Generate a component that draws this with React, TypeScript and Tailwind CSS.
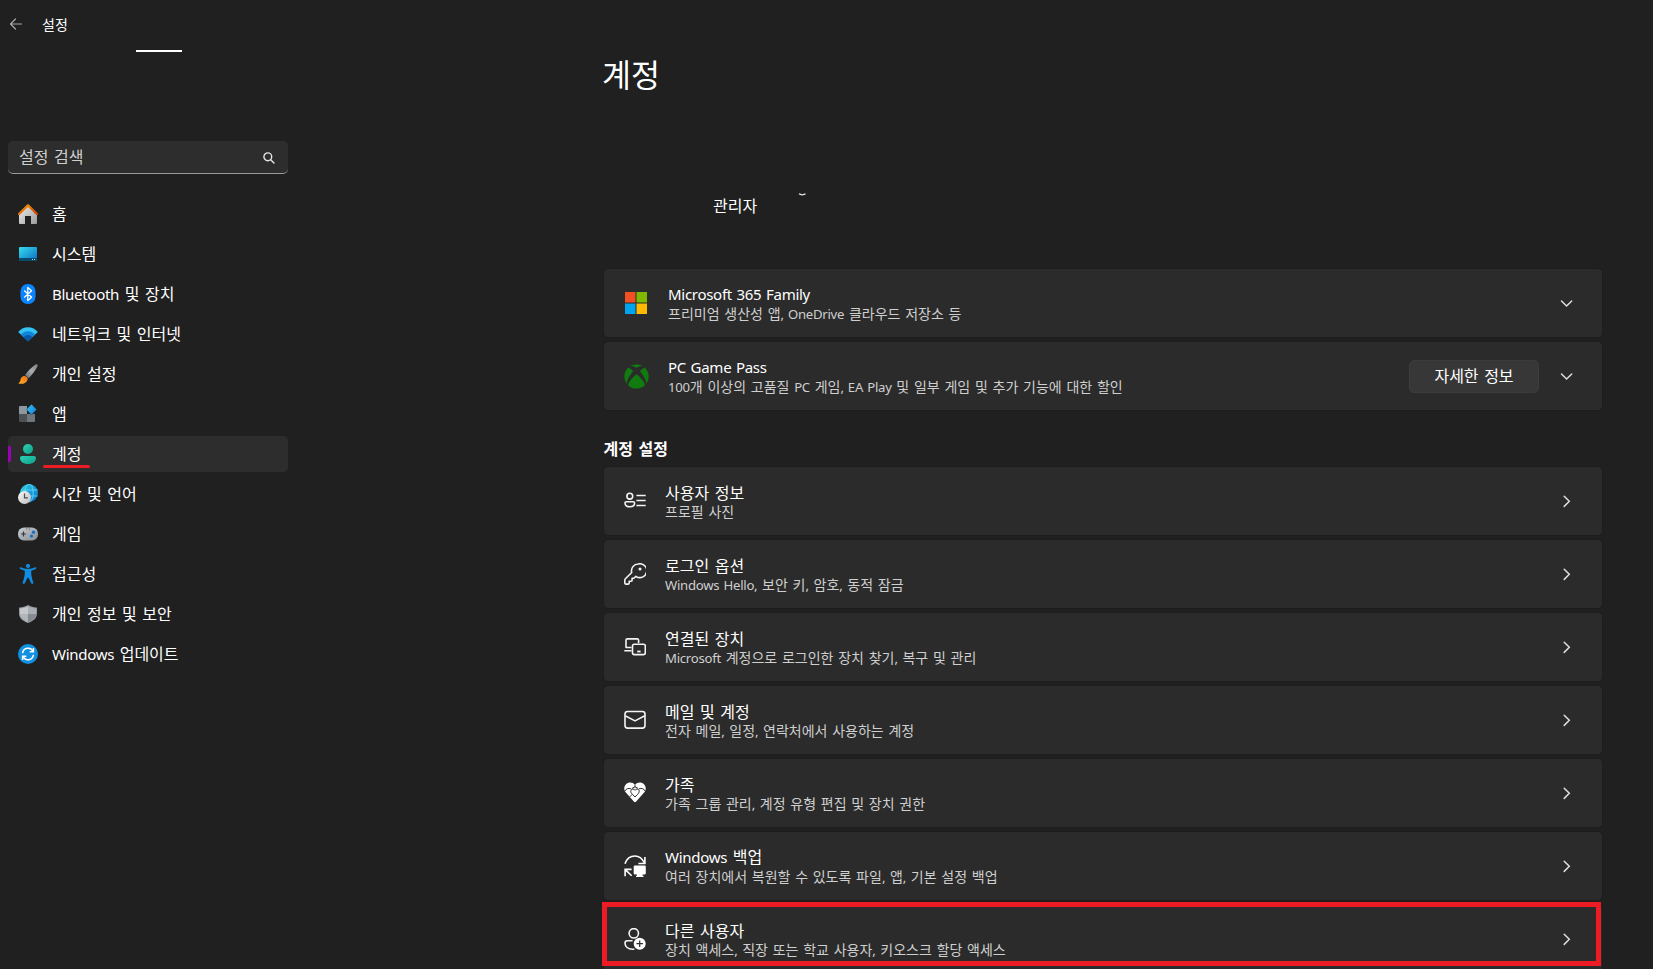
import type { ReactNode } from "react";
import { FaXbox } from "react-icons/fa";

interface NavItem {
  readonly id: string;
  readonly label: string;
  readonly icon: ReactNode;
}

interface SettingItem {
  readonly id: string;
  readonly title: string;
  readonly description: string;
  readonly icon: ReactNode;
}

const LATIN_RUN = /([A-Za-z0-9,]+(?: [A-Za-z0-9,]+)*)/;

// Latin runs are set slightly smaller than Hangul so both scripts look even
function Label({ text }: { readonly text: string }) {
  return (
    <>
      {text.split(LATIN_RUN).map((part, i) =>
        i % 2 === 1 ? (
          <span key={i} className="font-['Noto_Sans',sans-serif] text-[0.94em] tracking-[-0.02em] [word-spacing:1px]">
            {part}
          </span>
        ) : (
          part
        ),
      )}
    </>
  );
}

function HomeIcon() {
  return (
    <svg className="w-5 h-5" viewBox="0 0 20 20" fill="none">
      <defs>
        <linearGradient id="home-wall" x1="0" y1="0" x2="1" y2="1">
          <stop offset="0" stopColor="#f0f0f0" />
          <stop offset="1" stopColor="#9a9a9a" />
        </linearGradient>
        <linearGradient id="home-roof" x1="0" y1="0" x2="1" y2="1">
          <stop offset="0" stopColor="#f7a30c" />
          <stop offset="1" stopColor="#c93f08" />
        </linearGradient>
      </defs>
      <path d="M1 9.5L10 1.5l9 8V19a1 1 0 0 1-1 1h-5v-8H7v8H2a1 1 0 0 1-1-1z" fill="url(#home-wall)" />
      <path d="M1 10l9-8.6L19 10" stroke="url(#home-roof)" strokeWidth="2.4" strokeLinecap="round" strokeLinejoin="round" />
    </svg>
  );
}

function SystemIcon() {
  return (
    <svg className="w-5 h-5" viewBox="0 0 20 20" fill="none">
      <defs>
        <linearGradient id="system-screen" x1="0" y1="0" x2="1" y2="1">
          <stop offset="0" stopColor="#36dcec" />
          <stop offset="1" stopColor="#0a6cc4" />
        </linearGradient>
      </defs>
      <rect x="1" y="3" width="18" height="14" rx="1" fill="url(#system-screen)" />
      <path d="M1 14h18v2a1 1 0 0 1-1 1H2a1 1 0 0 1-1-1z" fill="#0b4a6b" />
      <path d="M14 15.5h1M16 15.5h1" stroke="#9fd8ee" />
    </svg>
  );
}

function BluetoothIcon() {
  return (
    <svg className="w-5 h-5" viewBox="0 0 20 20" fill="none">
      <rect x="2.5" y="0" width="15" height="20" rx="7.2" fill="#0a84ff" />
      <path d="M6.2 6.6l7.4 6.6-3.8 3.3v-13l3.8 3.3-7.4 6.6" stroke="#fff" strokeWidth="1.3" strokeLinejoin="round" />
    </svg>
  );
}

function NetworkIcon() {
  return (
    <svg className="w-5 h-5" viewBox="0 0 20 20" fill="none">
      <path d="M.2 8.1C2.6 5 6 3.2 10 3.2S17.4 5 19.8 8.1L10 17.3z" fill="#35c3f3" />
      <path d="M3 10.7C4.7 8.5 7 7.2 10 7.2s5.3 1.300 7 3.500l-7 6.600z" fill="#0f86dc" />
      <path d="M5.800 13.300c1-1.500 2.400-2.300 4.200-2.300s3.200.8 4.200 2.300L10 17.400z" fill="#0b57a8" />
    </svg>
  );
}

function BrushIcon() {
  return (
    <svg className="w-5 h-5" viewBox="0 0 20 20" fill="none">
      <defs>
        <linearGradient id="brush-handle" x1="1" y1="0" x2="0" y2="1">
          <stop offset="0" stopColor="#7d8286" />
          <stop offset="0.5" stopColor="#a9adb0" />
          <stop offset="1" stopColor="#606468" />
        </linearGradient>
        <linearGradient id="brush-tip" x1="0" y1="1" x2="1" y2="0">
          <stop offset="0" stopColor="#fbb42a" />
          <stop offset="1" stopColor="#ee6a12" />
        </linearGradient>
      </defs>
      <path d="M17.600.6c1.100-.8 2.500.3 1.900 1.600-2.200 4.400-5.300 8.600-8.900 12L7 11C10 7 13.500 3.300 17.600.6z" fill="url(#brush-handle)" />
      <path d="M5.600 12c2.300-.5 4.600 1.400 4 3.700C8.800 19.200 4 20.800.2 19.300c2-.8 2-2.400 2.500-4.200.3-1.500 1.400-2.700 2.900-3.100z" fill="url(#brush-tip)" />
    </svg>
  );
}

function AppsIcon() {
  return (
    <svg className="w-5 h-5" viewBox="0 0 20 20" fill="none">
      <defs>
        <linearGradient id="apps-diamond" x1="0" y1="0" x2="1" y2="1">
          <stop offset="0" stopColor="#3cc8f5" />
          <stop offset="1" stopColor="#0a78d6" />
        </linearGradient>
      </defs>
      <path d="M2 2h7v8H1V3a1 1 0 0 1 1-1z" fill="#8f979e" />
      <path d="M1 10h8v8H2a1 1 0 0 1-1-1z" fill="#4d5256" />
      <path d="M9 10h8v7a1 1 0 0 1-1 1H9z" fill="#6f767c" />
      <path d="M13.500.2l5.200 5.300-5.200 5.600-5.100-5.600z" fill="url(#apps-diamond)" stroke="#202020" strokeWidth=".3" />
    </svg>
  );
}

function AccountIcon() {
  return (
    <svg className="w-5 h-5" viewBox="0 0 20 20" fill="none">
      <defs>
        <linearGradient id="account-body" x1="0" y1="0" x2="1" y2="1">
          <stop offset="0" stopColor="#2bd4b8" />
          <stop offset="1" stopColor="#0f9c84" />
        </linearGradient>
      </defs>
      <circle cx="10" cy="5" r="5" fill="url(#account-body)" />
      <path d="M4 12h12a2 2 0 0 1 2 2c0 3.700-3.400 6-8 6s-8-2.300-8-6a2 2 0 0 1 2-2z" fill="url(#account-body)" />
    </svg>
  );
}

function TimeIcon() {
  return (
    <svg className="w-5 h-5" viewBox="0 0 20 20" fill="none">
      <defs>
        <linearGradient id="time-globe" x1="0" y1="0" x2="1" y2="1">
          <stop offset="0" stopColor="#30cfe0" />
          <stop offset="1" stopColor="#0a6fd0" />
        </linearGradient>
        <linearGradient id="time-clock" x1="0" y1="0" x2="1" y2="1">
          <stop offset="0" stopColor="#fafafa" />
          <stop offset="1" stopColor="#bdbdbd" />
        </linearGradient>
      </defs>
      <circle cx="11" cy="9" r="9" fill="url(#time-globe)" />
      <path d="M3 6h16.500M3 12h16.500" stroke="#5fe0f5" strokeWidth=".8" />
      <ellipse cx="11" cy="9" rx="4.200" ry="9" stroke="#5fe0f5" strokeWidth=".8" />
      <circle cx="6.500" cy="13.500" r="6.500" fill="url(#time-clock)" />
      <path d="M6.500 9.500v4.300h3.300" stroke="#4a4a4a" strokeWidth="1.200" />
    </svg>
  );
}

function GameIcon() {
  return (
    <svg className="w-5 h-5" viewBox="0 0 20 20" fill="none">
      <defs>
        <linearGradient id="game-body" x1="0" y1="0" x2="1" y2="1">
          <stop offset="0" stopColor="#c9ced3" />
          <stop offset="1" stopColor="#868c92" />
        </linearGradient>
      </defs>
      <rect x="0" y="3.500" width="20" height="13" rx="6" fill="url(#game-body)" />
      <path d="M3 10h5M5.500 7.500v5" stroke="#36393c" strokeWidth="1.200" />
      <path d="M8.200 5h1M10.800 5h1" stroke="#4c5054" />
      <circle cx="15.500" cy="8.200" r="1.600" fill="#0c6fc6" />
      <circle cx="13.500" cy="12" r="1.600" fill="#0c6fc6" />
    </svg>
  );
}

function AccessibilityIcon() {
  return (
    <svg className="w-5 h-5" viewBox="0 0 20 20" fill="#128ce0">
      <circle cx="10" cy="2" r="2.100" />
      <path d="M2.900 3.200c2 .9 4.500 1.600 7.100 1.600s5.100-.7 7.100-1.600c1.100-.4 1.700 1.200.7 1.700-1.500.7-3 1.300-4.400 1.600-.3 1.600-.2 3.200 0 4.700.3 2.300 1.100 4.800 1.900 7.200.4 1.400-1.500 2.100-2.100.8L10.600 14c-.2-.5-1-.5-1.200 0l-2.600 5.200c-.6 1.300-2.500.6-2.100-.8.800-2.400 1.600-4.900 1.900-7.200.2-1.500.3-3.100 0-4.700-1.400-.3-2.900-.9-4.400-1.600-1-.5-.4-2.100.7-1.700z" />
    </svg>
  );
}

function ShieldIcon() {
  return (
    <svg className="w-5 h-5" viewBox="0 0 20 20" fill="none">
      <path d="M10 1c2.700 1.600 5.400 2.400 8.300 2.400.4 0 .7.300.7.700v5.400c0 4.400-3.400 7.500-9 9.500-5.600-2-9-5.100-9-9.500V4.100c0-.4.300-.7.700-.7C4.600 3.400 7.300 2.600 10 1z" fill="#969ba1" />
      <path d="M10 2.200V10H2V4.400C4.700 4.300 7.500 3.600 10 2.200z" fill="#c5c9ce" />
      <path d="M10 2.200c2.500 1.400 5.300 2.100 8 2.200V10h-8z" fill="#a9aeb4" />
      <path d="M2 10h8v7.900c-4.900-1.900-8-4.400-8-7.900z" fill="#b1b6bb" />
      <path d="M10 10h8c0 3.500-3.100 6-8 7.900z" fill="#858b92" />
    </svg>
  );
}

function UpdateIcon() {
  return (
    <svg className="w-5 h-5" viewBox="0 0 20 20" fill="none">
      <circle cx="10" cy="10" r="10" fill="#1190e2" />
      <path d="M4.600 9.300A5.500 5.500 0 0 1 15 7.300M15.400 10.700A5.500 5.500 0 0 1 5 12.700" stroke="#fff" strokeWidth="1.500" />
      <path d="M15.400 3.900v3.800h-3.700M4.600 16.100v-3.800h3.700" stroke="#fff" strokeWidth="1.500" />
    </svg>
  );
}

function MicrosoftIcon() {
  return (
    <svg className="w-[22px] h-[22px]" viewBox="0 0 22 22">
      <path d="M0 0h10.500v10.500H0z" fill="#f25022" />
      <path d="M11.500 0H22v10.500H11.500z" fill="#7fba00" />
      <path d="M0 11.500h10.500V22H0z" fill="#00a4ef" />
      <path d="M11.500 11.500H22V22H11.500z" fill="#ffb900" />
    </svg>
  );
}

function UserInfoIcon() {
  return (
    <svg className="w-[22px] h-[22px]" viewBox="0 0 22 22" fill="none" stroke="#f4f4f4" strokeWidth="1.600">
      <circle cx="5.800" cy="6.200" r="2.900" />
      <path d="M2.300 11.700h7a1.300 1.300 0 0 1 1.300 1.300c0 2.300-1.800 3.800-4.800 3.800S1 15.300 1 13a1.300 1.300 0 0 1 1.300-1.300z" />
      <path d="M12.400 5.500h9.300M12.400 10.500h9.300M12.400 15.500h9.300" />
    </svg>
  );
}

function KeyIcon() {
  return (
    <svg className="w-[22px] h-[22px]" viewBox="0 0 22 22" fill="none" stroke="#f4f4f4" strokeWidth="1.600" strokeLinejoin="round">
      <path d="M14.300 1a6.800 6.800 0 0 0-6.600 8.500L1.400 15.800c-.4.400-.6.800-.6 1.300v3c0 .6.400 1 1 1h2.400c.6 0 1-.4 1-1v-1.900h1.900c.6 0 1-.4 1-1v-1.900h1.800l2-2A6.900 6.900 0 1 0 14.300 1z" />
      <circle cx="16" cy="6" r="1.500" fill="#f4f4f4" stroke="none" />
    </svg>
  );
}

function DevicesIcon() {
  return (
    <svg className="w-[22px] h-[22px]" viewBox="0 0 22 22" fill="none" stroke="#f4f4f4" strokeWidth="1.600" strokeLinejoin="round">
      <path d="M14.600 7V4.200a1.300 1.300 0 0 0-1.300-1.300h-10A1.300 1.300 0 0 0 2 4.200v7.300h5.500M.3 14.700h7.200" />
      <rect x="8.500" y="8.200" width="12.800" height="10.400" rx="1.800" />
      <path d="M13.200 15.500h3.400" strokeWidth="1.800" />
    </svg>
  );
}

function MailIcon() {
  return (
    <svg className="w-[22px] h-[22px]" viewBox="0 0 22 22" fill="none" stroke="#f4f4f4" strokeWidth="1.600" strokeLinejoin="round">
      <rect x="1" y="2.500" width="20" height="16.600" rx="2.600" />
      <path d="M1.200 6.700l9.800 5.200 9.800-5.200" />
    </svg>
  );
}

function FamilyIcon() {
  return (
    <svg className="w-[22px] h-[22px]" viewBox="0 0 22 22" fill="none">
      <path d="M11 3.100C13-.1 17.800-.1 20 2.300c2.500 2.600 2.200 6.300-.3 8.800l-7.500 8.500c-.7.700-1.700.7-2.400 0l-7.500-8.500C-.2 8.600-.5 4.900 2 2.300c2.200-2.400 7-2.400 9 .8z" fill="#fff" />
      <path d="M.8 9.200c1-2.300 3.600-3.500 6.400-2.300M21.200 9.200c-1-2.300-3.600-3.500-6.400-2.300" stroke="#2b2b2b" strokeWidth="1" />
      <path d="M11 8.300c1-1.900 3.300-1.700 4 0 .6 1.600-.2 2.800-1.300 3.900L11 15l-2.700-2.800C7.200 11.100 6.400 9.900 7 8.300c.7-1.700 3-1.900 4 0z" stroke="#2b2b2b" strokeWidth="1" />
      <path d="M11 3v2.600M8 6.300l3-1.500 3 1.500M8.300 12.200l-2.500 2.600" stroke="#2b2b2b" strokeWidth=".9" />
    </svg>
  );
}

function BackupIcon() {
  return (
    <svg className="w-[22px] h-[22px]" viewBox="0 0 22 22" fill="none" stroke="#fff" strokeWidth="1.600">
      <path d="M1 8.800C2.500 4.200 6.300 1 11 1c4.200 0 7.300 2.800 9.300 6.600" />
      <path d="M20.900 2v6.500h-6.500M7.600 14.400H1.100v6.800M1.300 14.600l6.400 6.200" />
      <path d="M11 10.500h9.500a1.300 1.300 0 0 1 1.300 1.300v6.400a1.300 1.300 0 0 1-1.300 1.300h-2v1.200h1V22h-7.500v-1.300h1v-1.200h-2a1.300 1.300 0 0 1-1.300-1.300v-6.400a1.300 1.300 0 0 1 1.300-1.300z" fill="#fff" stroke="none" />
    </svg>
  );
}

function OtherUsersIcon() {
  return (
    <svg className="w-[22px] h-[22px]" viewBox="0 0 22 22" fill="none" stroke="#f4f4f4" strokeWidth="1.600">
      <circle cx="9.800" cy="5.300" r="4.700" />
      <path d="M8.600 12.700H3.400A2.400 2.400 0 0 0 1 15.100c0 3.600 3 6 7.600 6.100h1.800" />
      <circle cx="15.700" cy="15.700" r="6" fill="#fff" stroke="none" />
      <path d="M15.700 12.500v6.400M12.500 15.700h6.400" stroke="#2b2b2b" strokeWidth="1.200" />
    </svg>
  );
}

const NAV_ITEMS: readonly NavItem[] = [
  { id: "home", label: "홈", icon: <HomeIcon /> },
  { id: "system", label: "시스템", icon: <SystemIcon /> },
  { id: "bluetooth", label: "Bluetooth 및 장치", icon: <BluetoothIcon /> },
  { id: "network", label: "네트워크 및 인터넷", icon: <NetworkIcon /> },
  { id: "personalization", label: "개인 설정", icon: <BrushIcon /> },
  { id: "apps", label: "앱", icon: <AppsIcon /> },
  { id: "accounts", label: "계정", icon: <AccountIcon /> },
  { id: "time", label: "시간 및 언어", icon: <TimeIcon /> },
  { id: "gaming", label: "게임", icon: <GameIcon /> },
  { id: "accessibility", label: "접근성", icon: <AccessibilityIcon /> },
  { id: "privacy", label: "개인 정보 및 보안", icon: <ShieldIcon /> },
  { id: "update", label: "Windows 업데이트", icon: <UpdateIcon /> },
];

const SETTING_ITEMS: readonly SettingItem[] = [
  { id: "info", title: "사용자 정보", description: "프로필 사진", icon: <UserInfoIcon /> },
  { id: "signin", title: "로그인 옵션", description: "Windows Hello, 보안 키, 암호, 동적 잠금", icon: <KeyIcon /> },
  { id: "devices", title: "연결된 장치", description: "Microsoft 계정으로 로그인한 장치 찾기, 복구 및 관리", icon: <DevicesIcon /> },
  { id: "mail", title: "메일 및 계정", description: "전자 메일, 일정, 연락처에서 사용하는 계정", icon: <MailIcon /> },
  { id: "family", title: "가족", description: "가족 그룹 관리, 계정 유형 편집 및 장치 권한", icon: <FamilyIcon /> },
  { id: "backup", title: "Windows 백업", description: "여러 장치에서 복원할 수 있도록 파일, 앱, 기본 설정 백업", icon: <BackupIcon /> },
  { id: "others", title: "다른 사용자", description: "장치 액세스, 직장 또는 학교 사용자, 키오스크 할당 액세스", icon: <OtherUsersIcon /> },
];

function ChevronDown() {
  return (
    <svg className="w-[14px] h-[14px]" viewBox="0 0 14 14" fill="none" stroke="#dedede" strokeWidth="1.500" strokeLinecap="round">
      <path d="M1.500 5L6.600 10l5.100-5" />
    </svg>
  );
}

function ChevronRight() {
  return (
    <svg className="w-[14px] h-[14px]" viewBox="0 0 14 14" fill="none" stroke="#dedede" strokeWidth="1.500" strokeLinecap="round">
      <path d="M4.200 2.200l5.100 5.100-5.100 5.100" />
    </svg>
  );
}

function CardText({ title, description }: { readonly title: string; readonly description: string }) {
  return (
    <div className="flex flex-1 flex-col">
      <span className="text-base leading-5 text-white [word-spacing:2px]">
        <Label text={title} />
      </span>
      <span className="text-sm leading-[18px] text-[#cfcfcf] [word-spacing:1.600px]">
        <Label text={description} />
      </span>
    </div>
  );
}

function Sidebar() {
  return (
    <aside className="flex w-[288px] shrink-0 flex-col pl-2">
      <header className="flex h-12 items-center gap-[18px]">
        <svg className="w-4 h-4" viewBox="0 0 16 16" fill="none" stroke="#a8a8a8" strokeWidth="1.200" strokeLinecap="round" strokeLinejoin="round">
          <path d="M13.500 8H2.500M7.500 3l-5 5 5 5" />
        </svg>
        <span className="text-sm leading-5 text-white">설정</span>
      </header>
      <div className="mt-[2px] ml-32 h-[2px] w-[46px] bg-white" />

      <div className="mt-[89px] flex h-[33px] items-center justify-between rounded-[5px] border-b border-[#9a9a9a] bg-[#2d2d2d] pr-[13px] pl-[11px]">
        <span className="pb-[2px] text-base leading-5 text-[#cfcfcf] [word-spacing:2px]">설정 검색</span>
        <svg className="mt-px w-3 h-3" viewBox="0 0 12 12" fill="none" stroke="#e6e6e6" strokeWidth="1.400" strokeLinecap="round">
          <circle cx="4.800" cy="4.800" r="3.900" />
          <path d="M7.700 7.700l3.300 3.300" />
        </svg>
      </div>

      <nav className="mt-[22px] flex flex-col gap-1">
        {NAV_ITEMS.map((item) => {
          const active = item.id === "accounts";
          return (
            <a
              key={item.id}
              className={`relative flex h-9 items-center gap-[14px] rounded-[5px] pl-[10px] ${active ? "bg-[#2d2d2d]" : ""}`}
            >
              {active && <span className="absolute top-[10px] left-0 h-4 w-[3px] rounded-r-[1px] bg-[#9a00b4]" />}
              {item.icon}
              <span className="pb-[2px] text-base leading-5 text-white [word-spacing:2px]">
                <Label text={item.label} />
              </span>
              {active && <span className="absolute top-[29px] left-[35px] h-[3px] w-[47px] rounded-full bg-[#ed1c24]" />}
            </a>
          );
        })}
      </nav>
    </aside>
  );
}

export default function App() {
  return (
    <div className="flex h-screen w-full overflow-hidden bg-[#202020] font-['Noto_Sans_CJK_KR',sans-serif] text-white">
      <Sidebar />

      <main className="ml-[315px] flex w-[1000px] shrink-0 flex-col">
        <h1 className="mt-[51px] -ml-px h-[46px] shrink-0 text-[31.5px] leading-[44px]">계정</h1>

        <div className="mt-24 flex h-[75px] shrink-0 flex-col pl-[110px]">
          <svg className="ml-[85px] h-[4px] w-[9px] shrink-0" viewBox="0 0 9 4" fill="none" stroke="#e8e8e8" strokeWidth="1.200">
            <path d="M1 .8c1.500 1.300 5 1.300 6.500 0" />
          </svg>
          <span className="mt-[-2px] text-base leading-5">관리자</span>
        </div>

        <section className="flex shrink-0 flex-col gap-[3px]">
          <div className="flex h-[70px] items-center rounded-[5px] border border-[#1d1d1d] bg-[#2b2b2b] pr-[28px] pl-[21px]">
            <div className="w-[43px]">
              <MicrosoftIcon />
            </div>
            <CardText title="Microsoft 365 Family" description="프리미엄 생산성 앱, OneDrive 클라우드 저장소 등" />
            <ChevronDown />
          </div>
          <div className="flex h-[70px] items-center rounded-[5px] border border-[#1d1d1d] bg-[#2b2b2b] pr-[28px] pl-[20px]">
            <div className="w-[44px]">
              <FaXbox className="h-[25px] w-[25px] text-[#107c10]" />
            </div>
            <CardText title="PC Game Pass" description="100개 이상의 고품질 PC 게임, EA Play 및 일부 게임 및 추가 기능에 대한 할인" />
            <button className="mr-[21px] h-[33px] w-[130px] rounded-[5px] border border-[#3c3c3c] bg-[#373737] pb-[2px] text-base leading-5 [word-spacing:2px]">
              자세한 정보
            </button>
            <ChevronDown />
          </div>
        </section>

        <h2 className="mt-[27px] h-7 shrink-0 pl-[0.5px] text-base leading-5 font-bold [word-spacing:2px]">계정 설정</h2>

        <section className="flex shrink-0 flex-col gap-[3px]">
          {SETTING_ITEMS.map((item) => (
            <div
              key={item.id}
              className="relative flex h-[70px] shrink-0 items-center rounded-[5px] border border-[#1d1d1d] bg-[#2b2b2b] pr-[28px] pl-[20px]"
            >
              <div className="w-[41px]">{item.icon}</div>
              <CardText title={item.title} description={item.description} />
              <ChevronRight />
              {item.id === "others" && (
                <div className="absolute top-[-3px] left-[-2px] h-16 w-[999px] border-[5px] border-[#ed1c24]" />
              )}
            </div>
          ))}
        </section>
      </main>
    </div>
  );
}
